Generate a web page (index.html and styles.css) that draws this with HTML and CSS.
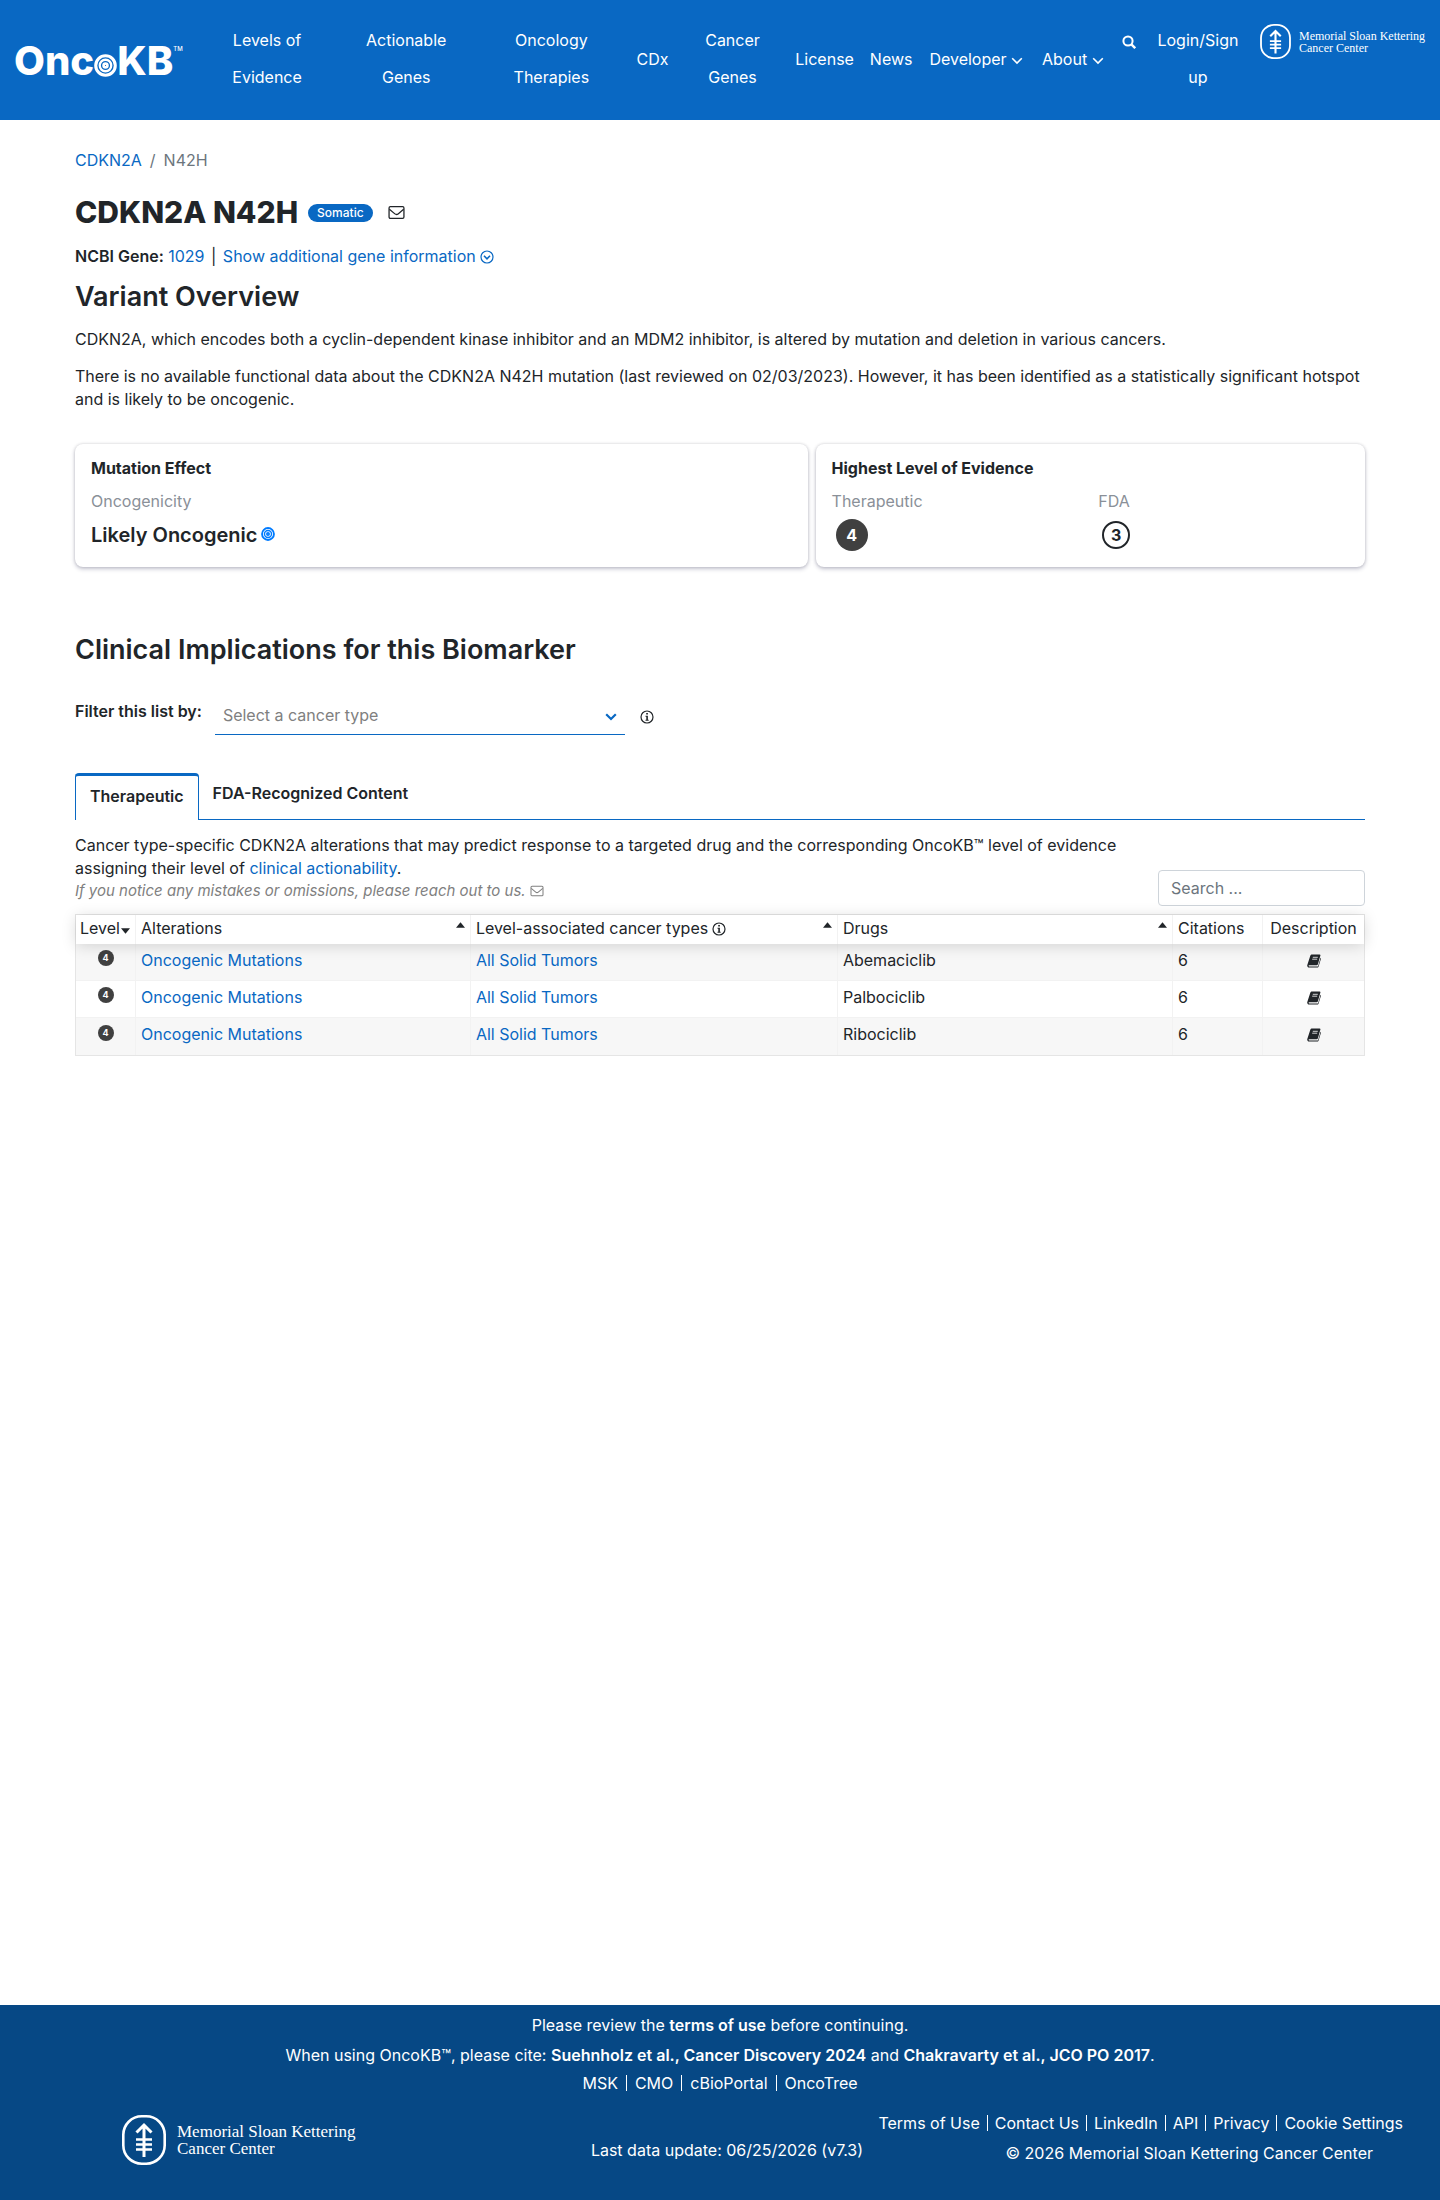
FILE: index.html
```html
<!DOCTYPE html>
<html lang="en">
<head>
<meta charset="utf-8">
<meta name="viewport" content="width=device-width, initial-scale=1">
<title>CDKN2A N42H | OncoKB</title>
<link rel="stylesheet" href="styles.css">
</head>
<body>
<svg class="defs" aria-hidden="true">
  <symbol id="target" viewBox="0 0 24 24"><g fill="none" stroke="currentColor"><circle cx="12" cy="12" r="10.2" stroke-width="3.2"/><circle cx="12" cy="12" r="6" stroke-width="2.4"/><circle cx="12" cy="12" r="2" stroke-width="2.8"/></g></symbol>
  <symbol id="msk" viewBox="0 0 44 50"><g fill="none" stroke="currentColor"><rect x="1.3" y="1.3" width="41.4" height="47.4" rx="18.5" stroke-width="2.6"/><path d="M22 42V10M14.5 17.500L22 10l7.500 7.500" stroke-width="3"/><path d="M14 24.500h16M14 29.500h16M14 34.500h16" stroke-width="2.600"/></g></symbol>
  <symbol id="mail" viewBox="0 0 16 14"><g fill="none" stroke="currentColor" stroke-width="1.200"><rect x="1" y="1.500" width="14" height="11" rx="1.200"/><path d="M1.300 4L6.500 8.300q1.500 1.200 3 0L14.700 4"/></g></symbol>
  <symbol id="chev" viewBox="0 0 12 8"><path d="M1.200 1.200L6 6l4.800-4.800" fill="none" stroke="currentColor" stroke-width="1.600"/></symbol>
  <symbol id="info" viewBox="0 0 14 14"><circle cx="7" cy="7" r="6" fill="none" stroke="currentColor" stroke-width="1.200"/><path d="M6.200 3h1.700v1.600H6.200zM5.500 5.700h2.400v4h.8v1H5.500v-1h.8v-3h-.8z" fill="currentColor"/></symbol>
  <symbol id="book" viewBox="0 0 14 14"><path fill="currentColor" d="M5 .5h7.600c.7 0 1 .5.800 1.100l-2.500 8.600c-.2.600-.6 1-1.300 1H2.200c-.9 0-.9 1.300.2 1.300h7.900c.4 0 .7-.2.800-.6l2.500-8.200c.5.300.5.700.3 1.300l-2.400 7.700c-.2.600-.7.900-1.300.9H2.200C.8 13.600-.1 12.200.3 10.900L3.300 1.800C3.600 1 4.200.5 5 .5z"/><path stroke="#fff" stroke-width=".8" d="M5.800 3.300h5M5.200 5.200h5"/></symbol>
</svg>

<header class="topbar">
  <a class="brand" href="#" aria-label="OncoKB"><span>Onc</span><svg><use href="#target"/></svg><span>KB</span><small>TM</small></a>
  <nav class="nav">
    <a href="#">Levels of<br>Evidence</a>
    <a href="#">Actionable<br>Genes</a>
    <a href="#">Oncology<br>Therapies</a>
    <a href="#">CDx</a>
    <a href="#">Cancer<br>Genes</a>
    <a href="#">License</a>
    <a href="#">News</a>
    <button type="button">Developer <svg class="caret"><use href="#chev"/></svg></button>
    <button type="button">About <svg class="caret"><use href="#chev"/></svg></button>
    <button type="button" class="top" aria-label="Search"><svg class="lens" viewBox="0 0 14 14"><g fill="none" stroke="currentColor" stroke-width="2"><circle cx="6" cy="6" r="4.600"/><path d="M9.200 9.200l4 4" stroke-width="2.400"/></g></svg></button>
    <a href="#">Login/Sign<br>up</a>
  </nav>
  <a class="msk" href="#"><svg><use href="#msk"/></svg><span>Memorial Sloan Kettering<br>Cancer Center</span></a>
</header>

<main class="page">
  <nav class="crumbs" aria-label="Breadcrumb"><a href="#">CDKN2A</a><span>/</span><span>N42H</span></nav>
  <div class="title">
    <h1>CDKN2A N42H</h1>
    <span class="pill">Somatic</span>
    <a class="feedback" href="#" aria-label="Send feedback"><svg class="mail"><use href="#mail"/></svg></a>
  </div>
  <div class="gene"><b>NCBI Gene:</b> <a href="#">1029</a> <span>|</span> <a class="more" href="#">Show additional gene information <svg viewBox="0 0 14 14"><g fill="none" stroke="currentColor"><circle cx="7" cy="7" r="6" stroke-width="1.200"/><path d="M4 5.800l3 3 3-3" stroke-width="1.600"/></g></svg></a></div>
  <h2>Variant Overview</h2>
  <div class="summary">
    <p>CDKN2A, which encodes both a cyclin-dependent kinase inhibitor and an MDM2 inhibitor, is altered by mutation and deletion in various cancers.</p>
    <p>There is no available functional data about the CDKN2A N42H mutation (last reviewed on 02/03/2023). However, it has been identified as a statistically significant hotspot and is likely to be oncogenic.</p>
  </div>

  <section class="cards">
    <article class="card">
      <h3>Mutation Effect</h3>
      <div class="facts"><div><span class="key">Oncogenicity</span><span class="value">Likely Oncogenic <svg><use href="#target"/></svg></span></div></div>
    </article>
    <article class="card">
      <h3>Highest Level of Evidence</h3>
      <div class="facts">
        <div><span class="key">Therapeutic</span><span class="value"><i class="level">4</i></span></div>
        <div><span class="key">FDA</span><span class="value"><i class="level fda">3</i></span></div>
      </div>
    </article>
  </section>

  <h2>Clinical Implications for this Biomarker</h2>
  <div class="filter">
    <label for="cancer">Filter this list by:</label>
    <div class="picker"><select id="cancer"><option>Select a cancer type</option></select><svg viewBox="0 0 12 8"><path d="M1.200 1.200L6 6l4.800-4.800" fill="none" stroke="currentColor" stroke-width="2.200"/></svg></div>
    <svg class="info"><use href="#info"/></svg>
  </div>

  <div class="tabs" role="tablist">
    <button type="button" class="active" role="tab" aria-selected="true">Therapeutic</button>
    <button type="button" role="tab" aria-selected="false">FDA-Recognized Content</button>
  </div>

  <div class="intro">
    <div class="about">
      <div>Cancer type-specific CDKN2A alterations that may predict response to a targeted drug and the corresponding OncoKB™ level of evidence assigning their level of <a href="#">clinical actionability</a>.</div>
      <div class="note"><em>If you notice any mistakes or omissions, please reach out to us.</em> <svg><use href="#mail"/></svg></div>
    </div>
    <input type="search" placeholder="Search ..." aria-label="Search table">
  </div>

  <table>
    <colgroup><col class="c-level"><col class="c-alt"><col class="c-type"><col><col class="c-cite"><col class="c-desc"></colgroup>
    <thead>
      <tr>
        <th class="tight"><div>Level<svg class="sort" viewBox="0 0 10 6"><path d="M0 0h10L5 6z"/></svg></div></th>
        <th><div>Alterations<svg class="sort up" viewBox="0 0 10 6"><path d="M0 6h10L5 0z"/></svg></div></th>
        <th><div>Level-associated cancer types <svg class="info"><use href="#info"/></svg><svg class="sort up" viewBox="0 0 10 6"><path d="M0 6h10L5 0z"/></svg></div></th>
        <th><div>Drugs<svg class="sort up" viewBox="0 0 10 6"><path d="M0 6h10L5 0z"/></svg></div></th>
        <th>Citations</th>
        <th class="mid">Description</th>
      </tr>
    </thead>
    <tbody>
      <tr><td class="mid"><i class="level small">4</i></td><td><a href="#">Oncogenic Mutations</a></td><td><a href="#">All Solid Tumors</a></td><td>Abemaciclib</td><td>6</td><td class="mid"><svg class="book"><use href="#book"/></svg></td></tr>
      <tr><td class="mid"><i class="level small">4</i></td><td><a href="#">Oncogenic Mutations</a></td><td><a href="#">All Solid Tumors</a></td><td>Palbociclib</td><td>6</td><td class="mid"><svg class="book"><use href="#book"/></svg></td></tr>
      <tr><td class="mid"><i class="level small">4</i></td><td><a href="#">Oncogenic Mutations</a></td><td><a href="#">All Solid Tumors</a></td><td>Ribociclib</td><td>6</td><td class="mid"><svg class="book"><use href="#book"/></svg></td></tr>
    </tbody>
  </table>
</main>

<footer class="footer">
  <div>Please review the <a href="#"><b>terms of use</b></a> before continuing.</div>
  <div>When using OncoKB™, please cite: <a href="#"><b>Suehnholz et al., Cancer Discovery 2024</b></a> and <a href="#"><b>Chakravarty et al., JCO PO 2017</b></a>.</div>
  <div class="links"><a href="#">MSK</a><a href="#">CMO</a><a href="#">cBioPortal</a><a href="#">OncoTree</a></div>
  <div class="base">
    <a class="msk big" href="#"><svg><use href="#msk"/></svg><span>Memorial Sloan Kettering<br>Cancer Center</span></a>
    <div class="updated">Last data update: <a href="#">06/25/2026 (v7.3)</a></div>
    <div class="legal">
      <div class="links"><a href="#">Terms of Use</a><a href="#">Contact Us</a><a href="#">LinkedIn</a><a href="#">API</a><a href="#">Privacy</a><a href="#">Cookie Settings</a></div>
      <div class="copy">© 2026 Memorial Sloan Kettering Cancer Center</div>
    </div>
  </div>
</footer>
</body>
</html>
```
FILE: styles.css
```css
* { box-sizing: border-box; }
body {
  margin: 0;
  min-height: 100vh;
  display: flex;
  flex-direction: column;
  background: #fff;
  color: #212529;
  font: 16px/23px Inter, "Open Sans", sans-serif;
}
a { color: #0968c3; text-decoration: none; }
button { border: 0; padding: 0; background: none; color: inherit; font: inherit; cursor: pointer; }
h1, h2, h3, p { margin: 0; }
.defs { position: absolute; width: 0; height: 0; }

.topbar {
  display: flex;
  align-items: center;
  min-height: 120px;
  padding: 0 15px 0 14px;
  background: #0968c3;
  color: #fff;
}
.topbar a { color: #fff; }
.brand {
  display: flex;
  align-items: center;
  width: 183px;
  margin-top: 2px;
  font-size: 40px;
  line-height: 40px;
  font-weight: 800;
}
.brand svg { width: 23px; height: 23px; margin-top: 8px; }
.brand small { align-self: flex-start; font-size: 6px; line-height: 16px; font-weight: 500; }
.nav {
  flex: 1;
  display: grid;
  grid-template-columns: 140fr 138fr 152fr 50fr 110fr 74fr 59fr 111fr 82fr 30fr 108fr;
  align-items: center;
  padding-bottom: 2px;
  text-align: center;
  line-height: 37px;
  white-space: nowrap;
}
.nav .top { align-self: start; }
.caret { width: 12px; height: 8px; }
.lens { width: 14px; height: 14px; vertical-align: middle; }
.msk {
  display: flex;
  align-items: center;
  gap: 8px;
  font: 12px/12px "Liberation Serif", serif;
  white-space: nowrap;
}
.msk svg { width: 31px; height: 35px; }
.topbar .msk { align-self: flex-start; margin: 24px 0 0 8px; }

.page { flex: 1; width: 100%; padding: 28px 75px 40px; }
.crumbs { display: flex; gap: 8px; line-height: 24px; color: #6c757d; }
.title { display: flex; align-items: center; margin-top: 20px; }
h1 { font-size: 30px; line-height: 40px; font-weight: 800; }
.pill {
  margin: 2px 15px 0 10px;
  padding: 0 9px;
  border-radius: 9px;
  background: #0968c3;
  color: #fff;
  font-size: 12px;
  line-height: 18px;
  font-weight: 500;
}
.feedback { color: #212529; display: flex; }
.mail { width: 17px; height: 15px; }
.gene { margin-top: 11px; line-height: 26px; }
.gene b { font-weight: 600; }
.gene span { margin: 0 2px; }
.gene svg { width: 14px; height: 14px; vertical-align: -2px; }
h2 { font-size: 27px; line-height: 32px; font-weight: 600; }
.gene + h2 { margin: 12px 0 15px; }
.summary { margin-right: -16px; }
p + p { margin-top: 14px; }

.cards { display: grid; grid-template-columns: 4fr 3fr; gap: 8px; margin: 33px 0 67px; }
.card {
  padding: 12px 16px;
  border-radius: 8px;
  box-shadow: 0 2px 4px rgba(30, 30, 80, .25), 0 0 3px rgba(0, 0, 0, .15);
}
.card h3 { font-size: 16px; line-height: 24px; font-weight: 700; }
.facts { display: grid; grid-auto-flow: column; grid-auto-columns: 1fr; gap: 16px; margin: 9px 0 4px; }
.key { display: block; line-height: 24px; color: #8a9098; }
.value { display: flex; align-items: center; gap: 4px; height: 32px; margin-top: 6px; font-size: 20px; font-weight: 600; }
.value svg { width: 14px; height: 14px; margin-top: -3px; color: #007bff; }
.level {
  display: inline-block;
  width: 32px;
  height: 32px;
  margin: 0 4px;
  border-radius: 50%;
  background: #404040;
  color: #fff;
  font-style: normal;
  font-size: 16px;
  line-height: 32px;
  font-weight: 700;
  text-align: center;
}
.fda { width: 28px; height: 28px; border: 2px solid #212529; background: none; color: #212529; line-height: 24px; }
.small { display: block; width: 16px; height: 16px; margin: 0 auto; font-size: 9px; line-height: 16px; }

.filter { display: flex; align-items: flex-start; margin-top: 31px; }
.filter label { line-height: 28px; font-weight: 600; }
.picker { position: relative; flex: 0 1 410px; margin: 0 15px 0 13px; }
.picker select {
  display: block;
  width: 100%;
  height: 38px;
  padding: 0 8px;
  border: 0;
  border-bottom: 1px solid #0968c3;
  border-radius: 0;
  appearance: none;
  background: none;
  color: #808080;
  font: inherit;
}
.picker svg { position: absolute; right: 8px; top: 16px; width: 12px; height: 8px; color: #0968c3; }
.info { width: 14px; height: 14px; }
.filter .info { margin-top: 13px; }

.tabs { display: flex; margin-top: 38px; border-bottom: 1px solid #0968c3; font-weight: 600; }
.tabs button { height: 46px; padding: 0 14px 6px; }
.tabs .active {
  padding: 0 14px 3px;
  margin-bottom: -1px;
  height: 47px;
  border: 1px solid #0968c3;
  border-top-width: 3px;
  border-bottom: 0;
  border-radius: 4px 4px 0 0;
  background: #fff;
}

.intro { display: flex; justify-content: space-between; align-items: flex-end; margin-top: 14px; }
.about { max-width: 1060px; padding-bottom: 5px; }
.note { color: #808080; font-size: 15px; line-height: 22px; }
.note svg { width: 14px; height: 12px; vertical-align: -1px; }
.intro input {
  width: 207px;
  height: 36px;
  margin-bottom: 1px;
  padding: 0 12px;
  border: 1px solid #ced4da;
  border-radius: 4px;
  color: #495057;
  font: inherit;
}
.intro input::placeholder { color: #6c757d; opacity: 1; }

table {
  width: 100%;
  margin-top: 7px;
  border: 1px solid #e5e5e5;
  border-collapse: separate;
  border-spacing: 0;
  table-layout: fixed;
}
.c-level { width: 60px; }
.c-alt { width: 26%; }
.c-type { width: 28.5%; }
.c-cite { width: 90px; }
.c-desc { width: 101px; }
thead { position: relative; z-index: 1; background: #fff; box-shadow: 0 2px 15px rgba(0, 0, 0, .15); }
th { height: 29px; padding: 0 5px 2px; border-right: 1px solid #f2f2f2; text-align: left; font-weight: 400; white-space: nowrap; }
th div { display: flex; align-items: center; gap: 4px; }
.tight { padding: 0 4px 2px; }
.tight div { gap: 1px; }
.sort { width: 9px; height: 6px; flex: none; fill: #212529; margin-top: 5px; }
.up { margin: -8px 0 0 auto; }
td { height: 37px; padding: 0 5px 4px; border-right: 1px solid #f2f2f2; border-bottom: 1px solid #f2f2f2; }
th:last-child, td:last-child { border-right: 0; }
tr:last-child td { border-bottom: 0; }
tbody tr:nth-child(odd) { background: #f7f7f7; }
.mid { text-align: center; }
td .small { margin-bottom: 4px; }
.book { width: 14px; height: 14px; vertical-align: -2px; }

.footer { padding: 9px 35px 35px; background: #064885; color: #fff; text-align: center; }
.footer a { color: #fff; }
.footer > div { line-height: 23px; margin-bottom: 7px; }
.footer b { font-weight: 600; }
.links { display: flex; justify-content: center; line-height: 16px; }
.footer > .links { line-height: 16px; margin-bottom: 24px; padding-top: 1px; }
.links a { padding: 0 8px; }
.links a + a { border-left: 1px solid #fff; }
.footer > .base { display: grid; grid-template-columns: minmax(0, 11fr) minmax(0, 6fr) minmax(0, 11fr); align-items: center; margin: 0; }
.footer .big { padding-left: 87px; gap: 11px; font-size: 17px; line-height: 17px; text-align: left; }
.big svg { width: 44px; height: 50px; }
.msk span { text-align: left; }
.updated { padding: 20px 0 0 14px; white-space: nowrap; }
.legal { display: flex; flex-direction: column; align-items: flex-end; gap: 11px; white-space: nowrap; }
.legal .links a { padding: 0 7px; }
.legal .links a:last-child { padding-right: 2px; }
.copy { margin-right: 32px; }
```
